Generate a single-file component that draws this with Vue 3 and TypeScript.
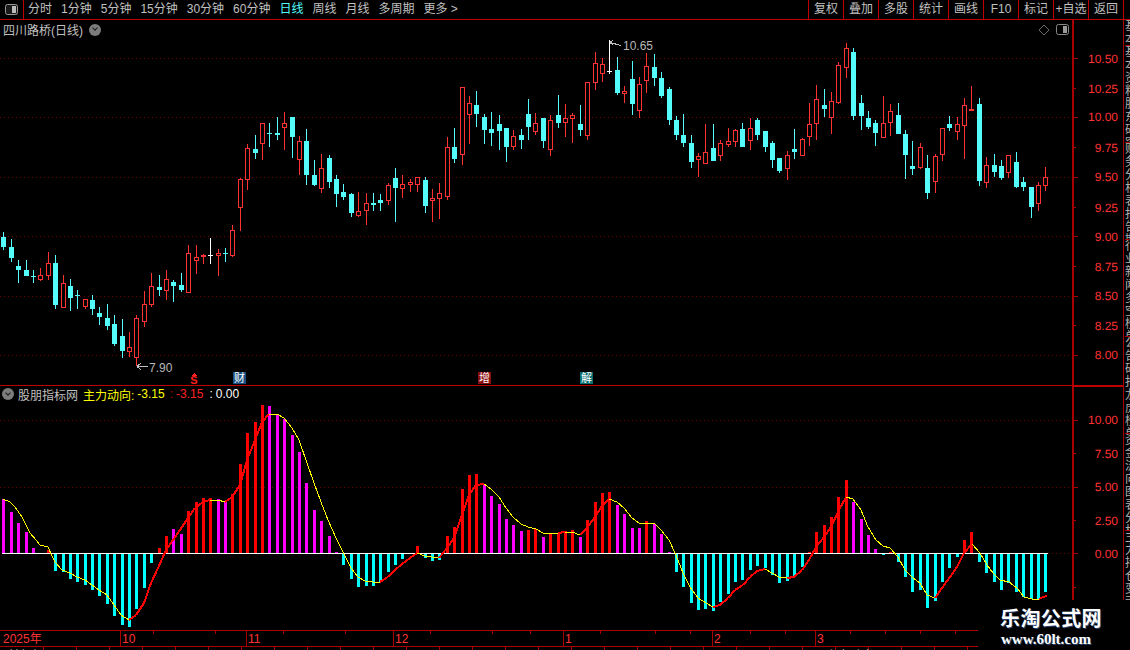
<template>
  <div class="terminal">
    <header class="toolbar">
      <div class="toolbar__toggle">
        <svg width="13" height="11" viewBox="0 0 13 11">
          <rect x="0.5" y="0.5" width="12" height="10" rx="2" fill="#1a1a1a" stroke="#999" />
          <rect x="7" y="2" width="4" height="7" fill="#bbb" />
        </svg>
      </div>
      <nav class="toolbar__tabs">
        <span v-for="tab in periods" :key="tab" :class="{ active: tab === '日线' }">{{ tab }}</span>
        <span>更多 &gt;</span>
      </nav>
      <div class="toolbar__actions">
        <span v-for="item in actions" :key="item">{{ item }}</span>
      </div>
    </header>

    <div class="workspace">
      <div class="panes">
        <section class="pane pane--main">
          <div class="pane__title">
            <span class="stock-name">四川路桥(日线)</span>
            <i class="chevron"></i>
            <span class="pane__tools">
              <svg width="12" height="12" viewBox="0 0 12 12">
                <path d="M6 1 L11 6 L6 11 L1 6 Z" fill="none" stroke="#666" />
              </svg>
              <svg width="13" height="11" viewBox="0 0 13 11">
                <rect x="0.5" y="0.5" width="12" height="10" rx="2" fill="none" stroke="#888" />
                <rect x="7" y="2" width="4" height="7" fill="#999" />
              </svg>
            </span>
          </div>
          <svg class="plot" width="1072" height="365" viewBox="0 20 1072 365" shape-rendering="crispEdges">
            <line v-for="y in mainGrid" :key="y" class="grid" x1="0" x2="1072" :y1="y + 0.5" :y2="y + 0.5" />
            <g v-for="c in candleShapes" :key="c.x">
              <rect :class="c.kind" :x="c.x" :y="c.high" width="1" :height="c.low - c.high" />
              <rect v-if="c.solid" :class="c.kind" :x="c.x - 2" :y="c.top" width="5" :height="Math.max(c.bottom - c.top, 1)" />
              <rect v-else class="hollow" :x="c.x - 1.5" :y="c.top + 0.5" width="4" :height="c.bottom - c.top - 1" />
            </g>
            <g class="callout">
              <path d="M148 366.5 H137 M137 366.5 L141 363 M137 366.5 L141 370" />
              <path d="M610 42.5 L621 45.5 M610 42.5 L613 40 M610 42.5 L613 45" />
            </g>
            <text class="price-note" x="149" y="372">7.90</text>
            <text class="price-note" x="623" y="50">10.65</text>
            <polygon points="194,373 197,376 191,376" fill="#ff2020" />
            <text class="mark mark--s" x="194" y="384">S</text>
            <rect x="233" y="372" width="13" height="12" fill="#1c4f80" />
            <text class="mark" x="239.5" y="382">财</text>
            <rect x="478" y="372" width="13" height="12" fill="#8a1010" />
            <text class="mark" x="484.5" y="382">增</text>
            <rect x="580" y="372" width="13" height="12" fill="#0b6f70" />
            <text class="mark" x="586.5" y="382">解</text>
          </svg>
        </section>

        <section class="pane pane--sub">
          <div class="pane__title pane__title--sub">
            <i class="chevron"></i>
            <span class="stock-name">股朋指标网</span>
            <span class="legend legend--yellow">主力动向:</span>
            <span class="legend legend--yellow legend--value">-3.15</span>
            <span class="legend legend--dim">:</span>
            <span class="legend legend--red">-3.15</span>
            <span class="legend legend--white legend--colon">:</span>
            <span class="legend legend--white">0.00</span>
          </div>
          <svg class="plot" width="1072" height="244" viewBox="0 386 1072 244" shape-rendering="crispEdges">
            <line class="grid" x1="0" x2="1072" y1="420.5" y2="420.5" />
            <line class="grid" x1="0" x2="1072" y1="487.5" y2="487.5" />
            <line class="grid" x1="1048" x2="1072" y1="553.5" y2="553.5" />
            <rect
              v-for="b in barShapes"
              :key="b.x"
              :class="'bar-' + b.kind"
              :x="b.x"
              :y="b.y"
              width="3"
              :height="b.height"
            />
            <rect x="2" y="553" width="1046" height="1" fill="#fff" />
            <line
              v-for="(s, i) in lineSegments"
              :key="i"
              :class="s.up ? 'seg-up' : 'seg-down'"
              :x1="s.x1"
              :y1="s.y1"
              :x2="s.x2"
              :y2="s.y2"
            />
          </svg>
        </section>

        <svg class="dates" width="978" height="20" viewBox="0 630 978 20" shape-rendering="crispEdges">
          <rect x="0" y="630" width="978" height="1" fill="#a80000" />
          <rect x="0" y="646" width="978" height="1" fill="#a80000" />
          <rect v-for="x in dateMajor" :key="x" :x="x" y="630" width="1" height="16" fill="#a80000" />
          <rect v-for="x in dateMinor" :key="x" :x="x" y="630" width="1" height="4" fill="#a80000" />
          <rect v-for="x in rowTicks" :key="x" :x="x" y="647" width="1" height="3" fill="#a80000" />
          <text class="date" x="3" y="643">2025年</text>
          <text v-for="d in dateLabels" :key="d.text" class="date" :x="d.x" y="643">{{ d.text }}</text>
          <text class="clipped" x="8" y="660">前复权</text>
          <text class="clipped" x="826" y="660">主力动向</text>
        </svg>
      </div>

      <aside class="rail">
        <svg class="axis" width="51" height="580" viewBox="1072 20 51 580" shape-rendering="crispEdges">
          <rect x="1072" y="20" width="2" height="580" fill="#a80000" />
          <rect x="1072" y="385" width="51" height="2" fill="#c00000" />
          <g v-for="t in axisTicks" :key="t.y">
            <rect x="1074" :y="t.y" :width="t.major ? 4 : 2" height="1" fill="#a80000" />
          </g>
          <text v-for="t in axisLabels" :key="t.y" class="axis-label" x="1118" :y="t.y + 4" text-rendering="geometricPrecision">{{ t.text }}</text>
        </svg>
        <div class="strip">
          <div v-for="(tab, i) in sideTabs" :key="i" class="strip__tab">{{ tab }}</div>
        </div>
      </aside>
    </div>

    <div class="watermark">
      <strong>乐淘公式网</strong>
      <span>www.60lt.com</span>
    </div>
  </div>
</template>

<script setup lang="ts">
import { computed } from "vue";

type Candle = [string, number, number, number, number];

const periods = ["分时", "1分钟", "5分钟", "15分钟", "30分钟", "60分钟", "日线", "周线", "月线", "多周期"];
const actions = ["复权", "叠加", "多股", "统计", "画线", "F10", "标记", "+自选", "返回"];
const sideTabs = ["基本", "基本资料股东研究", "财务分析表报告期", "行业新闻多空榜单", "公告研报龙虎榜单", "资金流向图表分析", "主力持仓变动明细"];

// kind, high, body top, body bottom, low (page pixels)
const candles: Candle[] = [
  ["c", 232, 237, 247, 250], ["c", 239, 247, 258, 262], ["c", 260, 266, 270, 283], ["c", 260, 270, 276, 276],
  ["c", 270, 276, 277, 283], ["r", 268, 275, 280, 281], ["r", 252, 263, 276, 280], ["c", 255, 263, 305, 309],
  ["r", 275, 283, 308, 308], ["c", 279, 286, 298, 311], ["c", 290, 295, 296, 309], ["r", 299, 299, 307, 309],
  ["c", 295, 300, 309, 315], ["c", 307, 313, 317, 325], ["c", 304, 318, 326, 330], ["c", 315, 324, 344, 346],
  ["c", 319, 336, 351, 358], ["r", 332, 347, 352, 357], ["r", 315, 318, 358, 366], ["r", 291, 304, 322, 327],
  ["r", 273, 286, 305, 307], ["c", 275, 287, 290, 296], ["r", 270, 279, 291, 300], ["c", 280, 282, 286, 302],
  ["c", 273, 285, 290, 292], ["r", 245, 253, 293, 293], ["r", 245, 257, 261, 274], ["r", 254, 255, 257, 264],
  ["w", 238, 255, 256, 264], ["r", 249, 253, 256, 276], ["c", 248, 253, 254, 262], ["r", 225, 230, 256, 257],
  ["r", 178, 179, 208, 231], ["r", 144, 148, 180, 190], ["c", 135, 149, 153, 159], ["r", 123, 123, 144, 160],
  ["c", 123, 133, 134, 147], ["c", 117, 133, 135, 140], ["r", 112, 123, 128, 150], ["c", 117, 117, 137, 158],
  ["r", 136, 141, 160, 175], ["c", 129, 141, 175, 185], ["c", 160, 175, 185, 186], ["r", 154, 168, 189, 193],
  ["c", 155, 158, 182, 188], ["c", 175, 179, 194, 207], ["c", 184, 192, 197, 200], ["c", 193, 194, 213, 217],
  ["r", 192, 211, 216, 217], ["r", 193, 203, 211, 225], ["c", 193, 203, 205, 211], ["c", 194, 200, 203, 211],
  ["r", 183, 185, 201, 205], ["c", 168, 178, 188, 222], ["r", 175, 184, 189, 198], ["r", 179, 182, 185, 192],
  ["r", 177, 177, 185, 192], ["c", 177, 180, 206, 213], ["r", 189, 198, 201, 222], ["r", 183, 193, 199, 219],
  ["r", 137, 147, 197, 200], ["c", 128, 147, 159, 163], ["r", 87, 87, 155, 165], ["r", 96, 103, 115, 144],
  ["c", 91, 105, 114, 127], ["c", 114, 117, 130, 144], ["c", 112, 129, 133, 146], ["c", 115, 124, 131, 150],
  ["c", 128, 128, 147, 162], ["r", 130, 136, 147, 150], ["c", 129, 135, 140, 149], ["c", 99, 114, 127, 140],
  ["r", 113, 123, 132, 135], ["c", 118, 118, 141, 148], ["r", 115, 120, 150, 156], ["c", 95, 115, 123, 128],
  ["r", 104, 118, 123, 137], ["r", 113, 115, 119, 143], ["c", 105, 124, 130, 136], ["r", 82, 82, 136, 140],
  ["r", 52, 63, 83, 90], ["r", 58, 64, 74, 82], ["w", 40, 71, 72, 74], ["c", 57, 70, 93, 95],
  ["r", 86, 91, 94, 103], ["c", 61, 79, 104, 115], ["r", 77, 84, 111, 118], ["r", 53, 66, 81, 93],
  ["c", 54, 67, 78, 86], ["c", 72, 78, 96, 98], ["c", 87, 89, 120, 125], ["c", 116, 120, 135, 140],
  ["c", 114, 135, 143, 147], ["c", 135, 143, 162, 168], ["r", 153, 156, 160, 177], ["r", 124, 152, 164, 164],
  ["c", 124, 148, 161, 161], ["r", 140, 143, 156, 161], ["r", 128, 141, 145, 147], ["r", 129, 130, 142, 147],
  ["c", 123, 129, 147, 147], ["r", 118, 128, 141, 150], ["c", 118, 120, 135, 140], ["c", 131, 131, 147, 152],
  ["c", 141, 143, 160, 168], ["c", 158, 158, 171, 173], ["r", 151, 155, 169, 180], ["c", 129, 149, 152, 159],
  ["r", 138, 139, 156, 156], ["r", 103, 124, 137, 146], ["r", 85, 99, 124, 140], ["c", 89, 105, 109, 117],
  ["r", 92, 101, 118, 134], ["r", 62, 65, 103, 104], ["r", 43, 48, 68, 78], ["c", 48, 52, 116, 120],
  ["c", 95, 103, 116, 130], ["c", 111, 118, 127, 129], ["c", 120, 123, 133, 146], ["r", 96, 123, 138, 138],
  ["r", 104, 111, 123, 136], ["c", 103, 115, 134, 134], ["c", 130, 134, 155, 179], ["c", 141, 166, 169, 175],
  ["r", 143, 147, 168, 169], ["c", 155, 168, 193, 199], ["r", 154, 156, 182, 193], ["r", 128, 128, 155, 161],
  ["c", 116, 124, 128, 131], ["r", 117, 124, 132, 140], ["r", 98, 105, 126, 159], ["R", 86, 109, 111, 111],
  ["c", 98, 104, 181, 186], ["r", 157, 165, 183, 188], ["c", 154, 165, 172, 177], ["c", 160, 166, 178, 180],
  ["r", 155, 155, 173, 178], ["c", 152, 162, 187, 188], ["c", 177, 182, 187, 191], ["c", 187, 187, 207, 218],
  ["r", 182, 185, 204, 211], ["r", 167, 177, 186, 191],
];

// colour and end of each histogram bar, drawn from the zero line at y=553
const bars: [string, number][] = [
  ["m", 499], ["m", 512], ["m", 523], ["m", 532], ["m", 548], ["m", 553], ["r", 550], ["c", 571], ["c", 572], ["c", 579],
  ["c", 582], ["c", 585], ["c", 590], ["c", 596], ["c", 604], ["c", 616], ["c", 625], ["c", 627], ["c", 609], ["c", 588],
  ["c", 563], ["r", 548], ["r", 536], ["m", 529], ["m", 534], ["r", 511], ["r", 502], ["r", 498], ["r", 498], ["m", 499],
  ["m", 502], ["r", 494], ["r", 464], ["r", 433], ["r", 422], ["r", 405], ["m", 406], ["m", 415], ["m", 419], ["m", 435],
  ["m", 452], ["m", 483], ["m", 510], ["m", 521], ["m", 536], ["m", 552], ["c", 565], ["c", 579], ["c", 587], ["c", 586],
  ["c", 586], ["c", 582], ["c", 572], ["c", 565], ["c", 559], ["c", 553], ["r", 546], ["c", 558], ["c", 561], ["c", 560],
  ["r", 536], ["r", 527], ["r", 489], ["r", 475], ["r", 474], ["m", 485], ["m", 496], ["m", 504], ["m", 519], ["m", 525],
  ["m", 531], ["r", 530], ["r", 529], ["m", 537], ["r", 534], ["r", 534], ["r", 531], ["r", 530], ["m", 537], ["r", 520],
  ["r", 502], ["r", 493], ["r", 492], ["m", 505], ["m", 514], ["m", 528], ["m", 528], ["r", 521], ["m", 524], ["m", 534],
  ["m", 552], ["c", 572], ["c", 587], ["c", 603], ["c", 610], ["c", 609], ["c", 611], ["c", 602], ["c", 594], ["c", 582],
  ["c", 580], ["c", 570], ["c", 566], ["c", 568], ["c", 575], ["c", 583], ["c", 581], ["c", 576], ["c", 567], ["r", 552],
  ["r", 532], ["r", 525], ["r", 517], ["r", 497], ["r", 480], ["m", 502], ["m", 519], ["m", 535], ["m", 549], ["c", 555],
  ["r", 552], ["c", 562], ["c", 577], ["c", 592], ["c", 590], ["c", 608], ["c", 601], ["c", 582], ["c", 568], ["c", 557],
  ["r", 540], ["r", 532], ["c", 562], ["c", 573], ["c", 582], ["c", 590], ["c", 583], ["c", 592], ["c", 597], ["c", 599],
  ["c", 599], ["c", 592],
];

const curve: [number, number][] = [
  [3, 499], [10, 502], [15, 507], [22, 517], [30, 533], [36, 540], [40, 545], [48, 547], [52, 556], [55, 562], [62, 570],
  [70, 573], [77, 577], [85, 580], [92, 585], [99, 590], [107, 595], [114, 605], [121, 615], [129, 620], [136, 615],
  [144, 603], [151, 583], [158, 568], [166, 550], [173, 540], [180, 530], [188, 518], [195, 508], [203, 502], [210, 500],
  [218, 500], [225, 502], [232, 497], [240, 485], [247, 460], [255, 440], [262, 422], [269, 414], [277, 414], [284, 418],
  [292, 428], [299, 440], [307, 463], [314, 483], [321, 502], [328, 520], [336, 538], [343, 552], [351, 568], [358, 577],
  [365, 581], [373, 582], [380, 582], [388, 577], [395, 570], [402, 564], [410, 558], [417, 553], [425, 556], [432, 557],
  [439, 558], [447, 548], [454, 538], [462, 515], [469, 495], [476, 485], [484, 484], [491, 489], [499, 497], [506, 508],
  [513, 517], [521, 524], [528, 527], [536, 529], [543, 533], [550, 533], [558, 533], [565, 532], [572, 532], [580, 535],
  [587, 528], [595, 517], [602, 506], [609, 499], [617, 502], [624, 508], [632, 518], [639, 523], [646, 523], [654, 523],
  [661, 530], [669, 540], [676, 555], [683, 573], [690, 587], [698, 598], [706, 603], [713, 607], [720, 605], [728, 598],
  [735, 590], [743, 585], [750, 577], [757, 571], [765, 569], [772, 573], [779, 577], [787, 578], [794, 577], [802, 570],
  [809, 560], [816, 547], [824, 537], [831, 527], [839, 510], [846, 497], [853, 499], [861, 510], [868, 527], [876, 540],
  [883, 546], [890, 548], [898, 557], [905, 570], [913, 578], [920, 583], [927, 595], [935, 598], [942, 588], [950, 577],
  [957, 567], [964, 553], [972, 544], [980, 553], [987, 565], [993, 573], [1000, 580], [1009, 582], [1017, 588],
  [1024, 597], [1032, 599], [1039, 599], [1043, 597], [1047, 596],
];

const mainGrid = [58, 117, 177, 236, 296, 355];
const dateMajor = [120, 246, 393, 563, 712, 815];
const dateMinor = [153, 215, 283, 345, 430, 492, 530, 600, 655, 690, 750, 785, 850, 885, 920, 955];
const rowTicks = Array.from({ length: 29 }, (_, i) => 43 + Math.round(i * 33));
const dateLabels = [
  { text: "10", x: 122 },
  { text: "11", x: 248 },
  { text: "12", x: 395 },
  { text: "1", x: 565 },
  { text: "2", x: 714 },
  { text: "3", x: 817 },
];

const axisLabels = [
  { text: "10.50", y: 59 }, { text: "10.25", y: 89 }, { text: "10.00", y: 117 }, { text: "9.75", y: 148 },
  { text: "9.50", y: 177 }, { text: "9.25", y: 208 }, { text: "9.00", y: 237 }, { text: "8.75", y: 267 },
  { text: "8.50", y: 296 }, { text: "8.25", y: 326 }, { text: "8.00", y: 355 }, { text: "10.00", y: 420 },
  { text: "7.50", y: 454 }, { text: "5.00", y: 487 }, { text: "2.50", y: 521 }, { text: "0.00", y: 554 },
];
const axisTicks = [
  ...mainGrid.map((y) => ({ y, major: true })),
  ...[88, 147, 207, 266, 325].map((y) => ({ y, major: false })),
  ...[420, 487, 553].map((y) => ({ y, major: true })),
  ...[453, 520, 587].map((y) => ({ y, major: false })),
];

const centerX = (i: number) => Math.round(3.4 + 7.39 * i);

const candleShapes = computed(() =>
  candles.map(([kind, high, top, bottom, low], i) => ({
    x: centerX(i),
    kind: kind === "R" ? "r" : kind,
    high,
    top,
    bottom,
    low,
    solid: kind !== "r" || bottom - top <= 2,
  })),
);

const barShapes = computed(() =>
  bars.map(([kind, end], i) => ({
    x: centerX(i) - 1,
    kind,
    y: Math.min(end, 553),
    height: Math.abs(end - 553),
  })),
);

const lineSegments = computed(() =>
  curve.slice(1).map(([x2, y2], i) => {
    const [x1, y1] = curve[i];
    return { x1, y1, x2, y2, up: y2 < y1 };
  }),
);
</script>

<style scoped>
.terminal {
  position: relative;
  width: 1130px;
  height: 650px;
  overflow: hidden;
  background: #000;
  color: #c0c0c0;
  font-family: "Liberation Sans", "Noto Sans CJK SC", sans-serif;
  font-size: 12px;
}
.toolbar {
  display: flex;
  align-items: stretch;
  height: 20px;
  box-sizing: border-box;
  border-bottom: 1px solid #c00000;
  line-height: 19px;
}
.toolbar__toggle {
  display: flex;
  align-items: center;
  justify-content: center;
  width: 23px;
  border-right: 1px solid #c00000;
}
.toolbar__tabs {
  display: flex;
  gap: 9px;
  padding-left: 4px;
  white-space: nowrap;
}
.toolbar__tabs .active {
  color: #54fcfc;
}
.toolbar__actions {
  display: flex;
  margin-left: auto;
  margin-right: 6px;
  border-right: 1px solid #c00000;
}
.toolbar__actions span {
  width: 35px;
  box-sizing: border-box;
  border-left: 1px solid #c00000;
  text-align: center;
  white-space: nowrap;
}
.workspace {
  display: flex;
}
.panes {
  width: 1072px;
  flex: none;
}
.pane {
  position: relative;
}
.pane--main {
  height: 365px;
  border-bottom: 1px solid #c00000;
}
.pane--sub {
  height: 244px;
}
.pane__title {
  position: absolute;
  top: 0;
  left: 0;
  right: 0;
  display: flex;
  align-items: center;
  height: 19px;
  padding-left: 3px;
}
.pane__title--sub {
  top: -1px;
  height: 18px;
  padding-left: 2px;
}
.pane__title--sub .stock-name {
  margin-left: 4px;
}
.pane__tools {
  display: flex;
  align-items: center;
  gap: 6px;
  margin-left: auto;
  margin-right: 3px;
}
.chevron {
  position: relative;
  display: block;
  flex: none;
  width: 12px;
  height: 12px;
  border-radius: 50%;
  background: #7c7c7c;
}
.chevron::after {
  content: "";
  position: absolute;
  left: 3.5px;
  top: 2.5px;
  width: 3px;
  height: 3px;
  border-right: 1.5px solid #1c1c1c;
  border-bottom: 1.5px solid #1c1c1c;
  transform: rotate(45deg);
}
.pane__title .stock-name + .chevron {
  margin-left: 6px;
}
.legend--yellow {
  color: #ffff00;
  margin-left: 5px;
}
.legend--value {
  margin-left: 3px;
}
.legend--dim {
  color: #c00000;
  margin-left: 5px;
}
.legend--red {
  color: #ff2020;
  margin-left: 3px;
}
.legend--white {
  color: #fff;
  margin-left: 3px;
}
.legend--colon {
  margin-left: 6px;
}
.plot,
.dates,
.axis {
  display: block;
}
.grid {
  stroke: #6e0000;
  stroke-width: 1;
  stroke-dasharray: 1 3;
}
.c {
  fill: #54fcfc;
}
.r {
  fill: #ff3232;
}
.w {
  fill: #fff;
}
.hollow {
  fill: #000;
  stroke: #ff3232;
  stroke-width: 1;
}
.callout path {
  fill: none;
  stroke: #c0c0c0;
  stroke-width: 1;
}
.price-note {
  fill: #b8b8b8;
  font-size: 12px;
}
.mark {
  fill: #fff;
  font-size: 11px;
  text-anchor: middle;
}
.mark--s {
  fill: #ff2020;
  font-size: 11px;
  font-weight: 700;
}
.bar-m {
  fill: #ff00ff;
}
.bar-r {
  fill: #ff0000;
}
.bar-c {
  fill: #00ffff;
}
.seg-up {
  stroke: #ff0000;
  stroke-width: 2;
}
.seg-down {
  stroke: #ffff00;
  stroke-width: 1;
}
.date {
  fill: #ff3232;
  font-size: 12px;
}
.clipped {
  fill: #b0b0b0;
  font-size: 12px;
}
.rail {
  display: flex;
  height: 580px;
}
.axis-label {
  fill: #ff3232;
  font-size: 12px;
  text-anchor: end;
}
.strip {
  width: 7px;
  border-left: 1px solid #a80000;
  box-sizing: border-box;
  overflow: hidden;
}
.strip__tab {
  width: 13px;
  height: 97px;
  box-sizing: border-box;
  margin-left: 1px;
  overflow: hidden;
  border-top: 1px solid #a80000;
  line-height: 13px;
  font-size: 12px;
  color: #b0b0b0;
  word-break: break-all;
}
.strip__tab:first-child {
  height: 25px;
  border-top: 0;
}
.watermark {
  position: absolute;
  left: 1000px;
  top: 604px;
  display: flex;
  flex-direction: column;
  color: #fff;
  text-shadow: 1px 1px 0 #24406e;
}
.watermark strong {
  font-family: "Noto Sans CJK SC", sans-serif;
  font-size: 20px;
  line-height: 28px;
  font-weight: 700;
  letter-spacing: 0.4px;
}
.watermark span {
  font-family: "Liberation Serif", serif;
  font-size: 15px;
  font-weight: 700;
  line-height: 14px;
  margin-left: 1px;
}
</style>
